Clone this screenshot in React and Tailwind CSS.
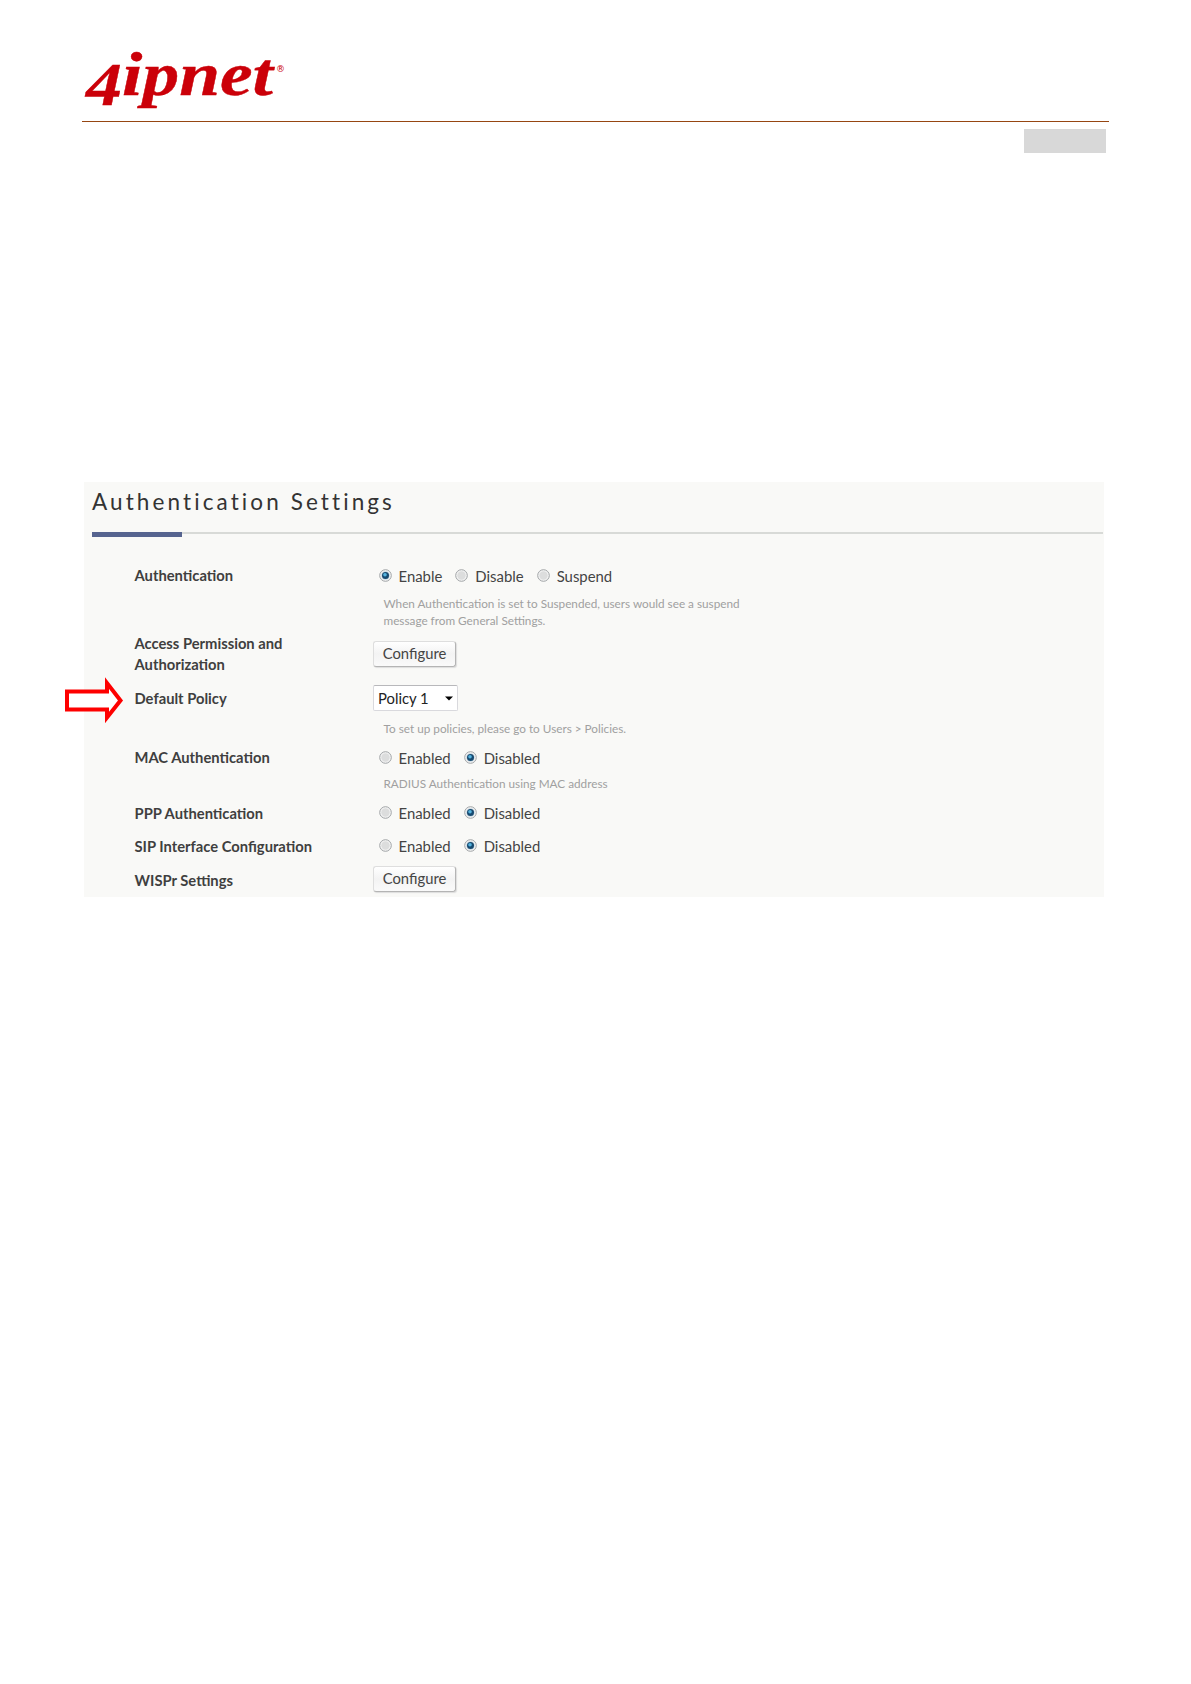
import React, { useState } from "react";

const enableOptions = ["Enabled", "Disabled"];

function Logo() {
  return (
    <svg width="210" height="80" viewBox="0 0 210 80" className="block" role="img" aria-label="4ipnet">
      <g fill="#cb0009" stroke="#cb0009" fontFamily="'Liberation Serif', serif" fontWeight="700" fontStyle="italic">
        <text x="4" y="65" fontSize="61" strokeWidth="0.4" textLength="36" lengthAdjust="spacingAndGlyphs">4</text>
        <text x="40" y="55" fontSize="62" strokeWidth="0.4" textLength="151" lengthAdjust="spacingAndGlyphs">ipnet</text>
      </g>
      <text x="194" y="32" fontSize="9" fill="#cb0009" fontFamily="'DejaVu Sans', sans-serif">®</text>
    </svg>
  );
}

function Radio({ name, label, checked, onChange }) {
  return (
    <label className="flex items-center">
      <input type="radio" name={name} checked={checked} onChange={onChange} className="sr-only" />
      <svg width="13" height="13" viewBox="0 0 13 13" className="mr-[7px] shrink-0">
        <circle cx="6.5" cy="6.5" r="5.8" fill="#f4f4f4" stroke="#a0a4a6" />
        <circle cx="6.5" cy="6.5" r="4.2" fill={checked ? "#c5d5df" : "#dcdddd"} />
        {checked && (
          <>
            <circle cx="6.5" cy="6.5" r="3.5" fill="#174a70" />
            <circle cx="6" cy="5.8" r="1.8" fill="#55b4df" />
          </>
        )}
      </svg>
      <span className="mr-[13px] block">{label}</span>
    </label>
  );
}

function RadioGroup({ name, options, initial }) {
  const [value, setValue] = useState(initial);
  return (
    <div className="flex h-[26px] items-center pl-[5.5px] text-[14.9px] text-[#444]">
      {options.map((option) => (
        <Radio
          key={option}
          name={name}
          label={option}
          checked={value === option}
          onChange={() => setValue(option)}
        />
      ))}
    </div>
  );
}

function ConfigureButton() {
  return (
    <button className="h-[26px] w-[83px] rounded-[3px] border border-[#dedede] border-r-[#b4b4b4] border-b-[#b4b4b4] bg-linear-to-b from-white via-[#f3f3f3] to-[#fafafa] pb-px text-[14.8px] leading-none text-[#444] shadow-[1px_1px_1px_#ddd]">
      Configure
    </button>
  );
}

function Row({ label, className, labelClass, children }) {
  return (
    <div className={`flex ${className}`}>
      <div className={`w-[239px] shrink-0 pl-[0.5px] text-[14.75px] font-bold text-[#3f3f3f] ${labelClass}`}>{label}</div>
      <div>{children}</div>
    </div>
  );
}

function Hint({ className, children }) {
  return <p className={`pl-[10.5px] text-[11.75px] leading-[17px] text-[#a0a0a0] ${className}`}>{children}</p>;
}

export default function App() {
  return (
    <div className="flex h-[1684px] w-[1191px] flex-col bg-white font-['Lato',sans-serif]">
      <header className="mr-[82px] ml-[82px] border-b border-[#964612] pt-10 pb-px">
        <Logo />
      </header>
      <div className="mt-[7px] mr-[85px] h-6 w-[82px] self-end bg-[#d8d8d8]" />

      {/* Settings panel */}
      <main className="mt-[329px] ml-[84px] h-[415px] w-[1020px] bg-[#f9f9f7] pt-[5px] pl-2">
        <h1 className="h-[45px] text-[22.5px] leading-[30px] tracking-[3.1px] text-[#333]">Authentication Settings</h1>
        <div className="mr-px h-[5px]">
          <div className="border-t-2 border-[#d8dad7]">
            <div className="-mt-0.5 h-[5px] w-[90px] bg-[#56648f]" />
          </div>
        </div>

        <div className="mt-[26px] pl-[42px]">
          <Row label="Authentication" className="h-[70px]" labelClass="leading-[25px]">
            <RadioGroup name="auth" options={["Enable", "Disable", "Suspend"]} initial="Enable" />
            <Hint className="mt-[6px]">
              When Authentication is set to Suspended, users would see a suspend
              <br />
              message from General Settings.
            </Hint>
          </Row>
          <Row
            label={
              <>
                Access Permission and
                <br />
                Authorization
              </>
            }
            className="h-[43px]"
            labelClass="leading-[21px]"
          >
            <div className="pt-2">
              <ConfigureButton />
            </div>
          </Row>
          <Row label="Default Policy" className="relative h-[69px]" labelClass="leading-[44px]">
            <svg width="60" height="52" viewBox="0 0 60 52" className="absolute -top-px -left-[70px]">
              <path
                d="M3 16.500H43V8L56.500 25.500L43 42.500V34.500H3Z"
                fill="white"
                stroke="#fe0000"
                strokeWidth="4"
              />
            </svg>
            <div className="pt-[9px]">
              <div className="flex h-[26px] w-[85px] items-center justify-between rounded-[2px] border border-[#d9d9dd] border-t-[#b8b8bb] bg-white pr-1 pl-1 text-[14.8px] text-[#222]">
                <span>Policy 1</span>
                <svg width="8" height="5" viewBox="0 0 8 5">
                  <path d="M0 0.500H8L4 4.500Z" fill="#000" />
                </svg>
              </div>
            </div>
            <Hint className="mt-[9px]">To set up policies, please go to Users &gt; Policies.</Hint>
          </Row>
          <Row label="MAC Authentication" className="h-[55px]" labelClass="leading-[25px]">
            <RadioGroup name="mac" options={enableOptions} initial="Disabled" />
            <Hint className="mt-1">RADIUS Authentication using MAC address</Hint>
          </Row>
          <Row label="PPP Authentication" className="h-[33px]" labelClass="leading-[26px]">
            <RadioGroup name="ppp" options={enableOptions} initial="Disabled" />
          </Row>
          <Row label="SIP Interface Configuration" className="h-[34px]" labelClass="leading-[26px]">
            <RadioGroup name="sip" options={enableOptions} initial="Disabled" />
          </Row>
          <Row label="WISPr Settings" className="h-[26px]" labelClass="leading-[26px]">
            <div className="-mt-px">
              <ConfigureButton />
            </div>
          </Row>
        </div>
      </main>
    </div>
  );
}
